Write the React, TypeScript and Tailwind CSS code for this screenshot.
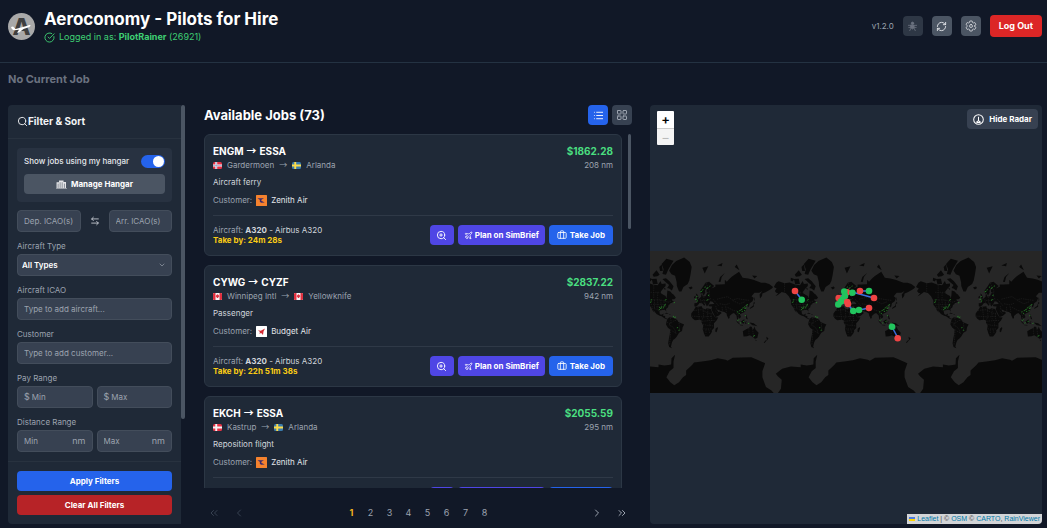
import React from "react";
import {
  ArrowLeftRight,
  Briefcase,
  ChevronDown,
  ChevronLeft,
  ChevronRight,
  ChevronsLeft,
  ChevronsRight,
  CircleCheckBig,
  LayoutGrid,
  List,
  Plane,
  RefreshCw,
  Search,
  ZoomIn,
} from "lucide-react";
import { IoSettingsOutline } from "react-icons/io5";

type Country = "no" | "se" | "ca" | "dk";

interface Place {
  icao: string;
  name: string;
  country: Country;
}

interface Job {
  from: Place;
  to: Place;
  pay: string;
  distance: string;
  kind: string;
  customer: "Zenith Air" | "Budget Air";
  takeBy: string;
}

const ESSA: Place = { icao: "ESSA", name: "Arlanda", country: "se" };

const JOBS: Job[] = [
  {
    from: { icao: "ENGM", name: "Gardermoen", country: "no" },
    to: ESSA,
    pay: "$1862.28",
    distance: "208 nm",
    kind: "Aircraft ferry",
    customer: "Zenith Air",
    takeBy: "24m 28s",
  },
  {
    from: { icao: "CYWG", name: "Winnipeg Intl", country: "ca" },
    to: { icao: "CYZF", name: "Yellowknife", country: "ca" },
    pay: "$2837.22",
    distance: "942 nm",
    kind: "Passenger",
    customer: "Budget Air",
    takeBy: "22h 51m 38s",
  },
  {
    from: { icao: "EKCH", name: "Kastrup", country: "dk" },
    to: ESSA,
    pay: "$2055.59",
    distance: "295 nm",
    kind: "Reposition flight",
    customer: "Zenith Air",
    takeBy: "23h 12m 05s",
  },
];

function Flag({ country }: { country: Country }) {
  return (
    <svg viewBox="0 0 18 14" className="h-[7px] w-[9px] shrink-0" aria-hidden="true">
      {country === "ca" ? (
        <>
          <rect width="18" height="14" rx="2" fill="#f3f4f6" />
          <path d="M2 0h3v14H2a2 2 0 0 1-2-2V2a2 2 0 0 1 2-2zM13 0h3a2 2 0 0 1 2 2v10a2 2 0 0 1-2 2h-3z" fill="#e0303f" />
          <path d="M9 2l1.200 2 1.600-.400-.300 2 1.300.800-2.400 2.200.200 1.200H7.400l.200-1.200-2.400-2.200 1.300-.800-.300-2 1.600.400z" fill="#e0303f" />
        </>
      ) : (
        <>
          <rect width="18" height="14" rx="3" fill={country === "se" ? "#3a7cae" : "#e63245"} />
          <path d="M0 7h18M6.500 0v14" stroke={country === "se" ? "#fbdb4a" : "#f6f4f7"} strokeWidth="3.800" />
          {country === "no" && <path d="M0 7h18M6.500 0v14" stroke="#8d97c4" strokeWidth="1.300" />}
        </>
      )}
    </svg>
  );
}

function Arrow() {
  return <span className="font-['Noto_Sans_CJK_JP',sans-serif] leading-none">→</span>;
}

function CustomerLogo({ name }: { name: Job["customer"] }) {
  return name === "Zenith Air" ? (
    <svg viewBox="0 0 22 22" className="size-[11px]" aria-hidden="true">
      <rect width="22" height="22" rx="1" fill="#f5822e" />
      <path d="M3 6.500h13l-4.500 2.500c-1.500 1.500-1 3 1 3.500l5 2.500-7 .500C7.500 15 7 12 8 10z" fill="#3d2a6b" />
    </svg>
  ) : (
    <svg viewBox="0 0 22 22" className="size-[11px]" aria-hidden="true">
      <rect width="22" height="22" rx="1" fill="#fff" />
      <path d="M4 8.500l5.500 1L18 5l-3 6-1 7-3.600-4-3.900 1.600 1.500-3.600z" fill="#d42b34" />
    </svg>
  );
}

function HangarIcon() {
  return (
    <svg viewBox="0 0 24 20" className="h-[9px] w-[11px]" fill="currentColor" aria-hidden="true">
      <path d="M1 17.500V5h5.500V1h10v3.500H22v13h2V19H0v-1.500z" opacity=".85" />
      <path d="M4.500 8v9.500M9 5v12.500M13.500 5v12.500M18.500 8v9.500" stroke="#4b5563" strokeWidth="1.300" />
    </svg>
  );
}

function BugIcon() {
  return (
    <svg viewBox="0 0 24 24" className="size-[11px]" fill="currentColor" stroke="currentColor" strokeWidth="1.800" strokeLinecap="round" aria-hidden="true">
      <circle cx="12" cy="5" r="2.600" />
      <path d="M8.500 9h7v5.500l-3.500 3-3.500-3z" />
      <path d="M3 9.500h18M4 14h16M9 15l-3 6M15 15l3 6" fill="none" />
    </svg>
  );
}

function RadarIcon() {
  return (
    <svg viewBox="0 0 24 24" className="size-[11px]" fill="none" stroke="currentColor" strokeWidth="2.200" aria-hidden="true">
      <circle cx="12" cy="12" r="10.500" />
      <path d="M12 6v8.500l5 4M7 18.500l5-4M8.500 18.500h7" />
    </svg>
  );
}

function Logo() {
  return (
    <svg viewBox="0 0 54 54" className="size-[27px] shrink-0" role="img" aria-label="Aeroconomy">
      <circle cx="27" cy="27" r="27" fill="#a9a9a9" />
      <text x="27" y="44" textAnchor="middle" fontFamily="Inter, sans-serif" fontWeight="800" fontSize="47" fill="#3f3f3f">
        A
      </text>
      <path d="M6 28l4-1 5 5 22-6c4-1 8-3 8-1s-4 4-8 5l-6 2-9 7-4 .500 4-6-9 1c-4 0-6-3-7-6.500z" fill="#fff" />
    </svg>
  );
}

/* ---------- Map ---------- */

const WORLD = 142.2;

// Land outlines as longitude, latitude pairs.
const LAND: number[][] = [
  // North America
  [-168, 66, -162, 70, -156, 71.3, -141, 69.6, -128, 70.3, -115, 68.5, -102, 67.8, -95, 71.5, -92, 69, -82, 69.5, -82, 67, -87, 65, -94, 61, -94, 58.7, -88, 56.7, -82, 55, -80, 51.3, -78.5, 56, -77.5, 62.3, -70, 61, -66, 58.6, -62, 57, -56, 52.5, -60, 50, -66, 50, -64.5, 47, -60.5, 46.5, -66, 43.8, -70.5, 43, -70.5, 41.5, -74.5, 39.8, -76, 35, -81, 31.5, -80.3, 25.5, -82.5, 28.5, -84.5, 30, -90, 29.5, -97, 28, -97.5, 22, -94.5, 18.3, -90.8, 19, -87, 21.5, -88.5, 16, -83.3, 15, -83, 10.5, -80, 9.3, -77.3, 8.5, -80, 7.3, -85, 10, -92, 14.5, -97, 16, -105, 20, -109, 25, -114.5, 31, -112, 27, -110, 23, -115, 28, -118, 34, -124, 40, -124.3, 48, -130, 54.5, -138, 59, -148, 60.5, -158, 56.5, -164, 54.6, -157, 58.8, -162, 59.5, -165.5, 61.5, -161, 64.5],
  // Greenland
  [-73, 78.2, -66, 80.8, -55, 82.3, -35, 83.4, -21, 82, -16, 80, -19, 76, -22, 72, -26, 69, -37, 66, -42, 61, -48, 61, -53.5, 67, -54, 70.5, -58, 75.3, -67, 76.2],
  // Canadian Arctic
  [-90, 73, -81, 73.6, -72, 71.3, -62, 66.8, -66, 62.3, -73, 64.5, -78, 65, -73, 68, -80, 70],
  [-117, 73, -105, 73.2, -102, 69, -114, 69],
  [-125, 74, -116, 73, -121, 71.2, -125.5, 72],
  [-92, 81.2, -80, 83, -62, 82.4, -75, 79, -81, 76, -90, 76.4, -87, 79],
  [-115, 76, -105, 78.4, -97, 76, -103, 75, -112, 74.7],
  [-98, 80, -92, 81, -89, 78, -96, 78],
  [-87, 65.5, -81, 64, -84, 63],
  // South America
  [-77.3, 8.5, -72, 12, -62, 10.6, -52, 5, -50, 0, -44, -2.5, -35, -6, -38.8, -13, -40.5, -22, -48, -26, -54, -34.5, -58, -38.3, -63, -41, -66, -46, -68.5, -52.5, -66, -55, -73, -53, -75.5, -47, -73.5, -38, -71.5, -30, -70.3, -18.5, -76, -14, -81, -6, -80, 0],
  // Cuba, Hispaniola
  [-84.5, 22, -80, 23, -74.5, 20.2, -77.5, 20],
  [-73.5, 20, -68.5, 19, -72, 18.2],
  // Iceland, British Isles
  [-24, 65.5, -16, 66.5, -13.6, 65, -19, 63.4],
  [-5.5, 58.5, -2, 57.6, 1.5, 52.6, 1, 51, -5, 50, -3, 54],
  [-10, 54, -6, 55.2, -6.3, 52.2, -10, 51.7],
  // Svalbard and Novaya Zemlya
  [11, 79.6, 26, 80.3, 17, 76.7],
  [52, 71, 56, 74.5, 68, 77, 60, 74.5, 57, 70.7],
  [48, 80.6, 62, 81.6, 60, 80.3],
  [93, 80, 105, 78.5, 98, 81],
  [137, 75.5, 150, 75.2, 143, 73.5],
  // Eurasia
  [-9.3, 43, -1.5, 43.5, -4.5, 48.4, 1.5, 50.5, 8, 53.8, 8.3, 57, 10.7, 57.5, 12, 54.2, 19, 54.5, 23.5, 59.3, 29, 60, 22, 60.2, 21.5, 63, 25.3, 65, 21.5, 65.3, 17.5, 61.5, 18.7, 60, 14.3, 55.5, 11, 59, 7, 58, 5, 61.5, 13, 66.5, 19, 70, 28, 71, 41, 67, 34, 64.5, 44, 66.3, 44, 68.5, 54, 68.5, 68, 68.7, 68, 72.5, 73, 71, 80, 73.3, 87, 75, 104, 77.7, 113, 74, 127, 73.5, 140, 72.5, 160, 70, 170, 70, 180, 69, 190, 66, 187, 64.4, 180, 62.5, 171, 60, 163, 58.5, 162, 55, 157, 51.2, 156, 57, 163, 61.7, 155, 59.3, 143, 59.3, 135.5, 54.7, 141, 52, 138, 46.5, 131, 42.8, 129.3, 37, 126.4, 34.5, 125, 39.5, 118, 39, 122, 37, 119.5, 34.8, 122, 30, 118, 24.5, 110, 21, 106, 19.5, 109, 13, 105, 8.8, 100.5, 13.5, 104, 1.3, 98.5, 9, 97.5, 16.5, 91, 22.5, 86.5, 20.5, 80, 15, 80, 11, 77.5, 8, 73, 17, 72.5, 21, 66.8, 25, 57, 27, 51, 30, 48, 30, 51.5, 25, 56, 25.7, 59.8, 22.5, 52, 15.7, 43.5, 12.8, 39, 21, 34.8, 28.5, 34, 32, 36, 36.5, 27.5, 37, 26.5, 40, 31, 41.3, 41.5, 41.5, 37, 45.5, 31, 46.5, 28, 42, 22.5, 36.8, 19.5, 41.8, 13, 45.6, 18.3, 40.2, 15.8, 38.2, 10.5, 43.2, 4, 43.5, -0.5, 39, -5.5, 36.2, -9, 37.3],
  // Africa
  [-6, 35.7, 10, 37.3, 11, 33.5, 19, 30.3, 22, 32.8, 32.3, 31.2, 37, 21, 43, 12, 51.2, 11.7, 47, 4, 40.5, -3, 40.5, -15, 35, -20, 35.3, -24, 32.5, -28, 27, -34, 18.5, -34.3, 15, -27, 11.8, -17.5, 13.5, -9, 9, -1, 9.5, 4, 4, 6.2, -7.5, 4.5, -13, 8.5, -17.3, 14.7, -17, 21, -10, 30],
  [49.5, -12.3, 50.3, -15.5, 47, -25, 43.5, -23, 44.3, -16.3],
  // Japan, Indonesia, Philippines, New Guinea
  [141.5, 45.3, 145, 43.3, 141, 41.5, 141, 36, 131, 31.3, 132, 34.3, 139, 38],
  [142, 54, 144, 50, 142.5, 46],
  [95.5, 5.5, 104, -2, 105.5, -5.8, 100, -1.5],
  [109, 1.5, 117, 7, 118, 1, 115.5, -4, 110.5, -2.5],
  [105.5, -6.5, 114, -7.5, 114, -8.7, 106.5, -7.7],
  [119.5, -5, 120, 1, 125, 1.5, 121, -1, 123, -4],
  [120.5, 18.5, 122, 18, 126, 7, 122.5, 8],
  [131, -0.8, 141, -2.7, 150.5, -10.5, 143, -8.5, 138, -8, 133, -4],
  // Australia, Tasmania, New Zealand
  [113.5, -22.5, 122, -18, 129, -14.8, 132, -11.3, 137, -12.2, 136, -15.2, 140.8, -17.5, 142.5, -10.8, 146, -19, 153.3, -26, 150, -37.4, 144, -38.7, 138, -35, 131, -31.5, 124, -33.5, 115.2, -34.3],
  [145, -40.8, 148.3, -41, 147, -43.5],
  [173, -34.5, 178.3, -37.8, 175.2, -41.5, 173.8, -39.2],
  [172.7, -40.6, 174, -41.8, 168.5, -46.5, 166.5, -45.8],
  // Antarctica
  [-158, -85.05, -150, -84, -148, -81, -158, -79.5, -163, -78.3, -155, -77, -147, -75.5, -125, -74, -100, -74.5, -100, -72.5, -85, -73.3, -75, -73, -68, -72.5, -67, -67, -58, -63.5, -62, -70, -62, -75, -72, -77, -80, -80, -70, -82, -60, -83, -48, -82, -38, -80, -30, -79, -30, -76.5, -15, -73, -10, -71, 10, -70, 32, -69, 50, -67, 70, -68.5, 75, -69.5, 88, -66.7, 110, -66.3, 135, -66, 150, -68.5, 170, -71.5, 163, -77, 163, -80, 172, -83.5, 186, -84.4, 192, -85.05],
];

// Country borders, drawn faintly over the land.
const BORDERS: number[][] = [
  [-141, 69.6, -141, 60],
  [-123, 49, -95, 49, -84, 46.5, -75, 45, -68, 47],
  [-117, 32.5, -106, 31.5, -97.5, 26],
  [-110, 49, -110, 32],
  [-102, 60, -102, 30],
  [-95, 49, -91, 30],
  [-120, 60, -95, 60],
  [-112, 68, -112, 49],
  [-86, 46, -86, 31],
  [-120, 41, -82, 41],
  [-118, 36, -78, 36],
  [-70, 11, -68, 2, -73, -8, -65, -11, -58, -20, -55, -30],
  [-79, 0, -70, -4, -60, 4, -52, 4],
  [-69, -18, -70, -35, -72, -50],
  [-65, -22, -55, -27],
  [-48, -2, -46, -24],
  [-12, 28, 10, 30, 25, 22, 34, 22],
  [-16, 15, 0, 14, 15, 13, 24, 14, 36, 14],
  [0, 36, 2, 20, 3, 6],
  [13, 33, 14, 14, 10, 5],
  [25, 32, 24, 10, 28, 4],
  [33, 22, 34, 4, 30, -2, 30, -12],
  [10, 2, 30, 4, 42, 4],
  [12, -5, 22, -8, 30, -8, 40, -10],
  [13, -17, 24, -17, 35, -17],
  [20, -18, 20, -30],
  [27, -18, 30, -28],
  [20, 70, 29, 62, 28, 55, 32, 50, 22, 48, 8, 48],
  [6, 50, 8, 44],
  [15, 54, 15, 46, 21, 42],
  [38, 50, 48, 42, 52, 38],
  [48, 50, 60, 52, 75, 54, 87, 49, 100, 51, 118, 49, 131, 48],
  [55, 42, 70, 40, 80, 43],
  [45, 38, 47, 30],
  [61, 36, 62, 26],
  [70, 37, 72, 25],
  [75, 35, 90, 28, 98, 27, 106, 22],
  [88, 48, 105, 42, 120, 46],
  [98, 22, 103, 14],
  [44, 27, 52, 20],
  [129, -15, 129, -31],
  [138, -16, 141, -37],
];

// Precipitation echoes as longitude, latitude pairs.
const RADAR: number[][] = [
  [-120, 45], [-118, 49], [-97, 35], [-94, 33], [-92, 36], [-88, 34], [-85, 38], [-83, 41], [-98, 30], [-82, 49], [-60, 44], [-62, 14],
  [-58, 12], [-48, -20], [-52, -14], [-5, 50], [-3, 54], [-2, 47], [8, 61], [12, 63], [18, 66], [24, 65], [27, 56], [30, 67], [24, 49],
  [100, 25], [106, 28], [110, 30], [114, 34], [118, 36], [120, 33], [112, 26], [118, 28], [124, 40], [104, 21], [120, 16], [102, 5],
  [116, 2], [128, -3], [142, -33], [108, -2],
];

function project(lon: number, lat: number): [number, number] {
  const x = ((lon + 180) / 360) * WORLD;
  const y = WORLD / 2 - (WORLD / (2 * Math.PI)) * Math.log(Math.tan(Math.PI / 4 + (lat * Math.PI) / 360));
  return [x, y];
}

function toPath(flat: number[]): string {
  let d = "";
  for (let i = 0; i < flat.length; i += 2) {
    const [x, y] = project(flat[i], flat[i + 1]);
    d += (i === 0 ? "M" : "L") + x.toFixed(2) + " " + y.toFixed(2);
  }
  return d;
}

const LAND_PATH = LAND.map((ring) => toPath(ring) + "Z").join("");
const BORDER_PATH = BORDERS.map(toPath).join("");

const ROUTES = [
  [145, 40, 152, 49],
  [202, 41, 224, 47],
  [210, 40, 219, 40],
  [188, 47, 197, 41],
  [188, 53, 197, 51],
  [198, 53, 203, 60],
  [209, 59, 219, 57],
  [242, 76, 248, 87],
];

const MARKERS: [number, number, "dep" | "arr"][] = [
  [145, 40, "arr"], [151.7, 48.7, "dep"], [197, 41.3, "arr"], [194.3, 40.6, "dep"], [202.4, 41.8, "dep"], [210, 40, "arr"],
  [219, 40, "dep"], [224, 47, "arr"], [188.7, 47, "arr"], [195, 45, "dep"], [193, 48, "dep"], [191, 50.6, "dep"],
  [188.3, 53.4, "dep"], [197.2, 51, "arr"], [198, 53, "arr"], [219, 57, "arr"], [209, 59, "dep"], [203.3, 60, "dep"],
  [242, 75.8, "dep"], [247.7, 87.2, "arr"],
];

function WorldMap() {
  return (
    <svg viewBox="0 0 392 142" preserveAspectRatio="xMidYMid slice" className="mt-[146px] h-[142px] w-full" role="img" aria-label="Map of available jobs">
      <defs>
        <g id="world">
          <path d={LAND_PATH} fill="#0a0a0a" />
          <path d={BORDER_PATH} fill="none" stroke="#262626" strokeWidth="0.5" strokeDasharray="1.500 0.800" />
          {RADAR.map(([lon, lat], i) => {
            const [x, y] = project(lon, lat);
            return <ellipse key={i} cx={x} cy={y} rx={i % 3 === 0 ? 1.2 : 0.8} ry="0.5" fill="#2a8a2c" opacity="0.8" transform={`rotate(-35 ${x} ${y})`} />;
          })}
        </g>
      </defs>
      <rect width="392" height="142" fill="#262626" />
      <use href="#world" x={-23.1} />
      <use href="#world" x={119.1} />
      <use href="#world" x={261.3} />
      {ROUTES.map(([x1, y1, x2, y2], i) => (
        <line key={i} x1={x1} y1={y1} x2={x2} y2={y2} stroke="#3b6fe0" strokeWidth="1.500" />
      ))}
      {MARKERS.map(([x, y, kind], i) => (
        <circle key={i} cx={x} cy={y} r="3.300" fill={kind === "dep" ? "#22c55e" : "#ef4444"} />
      ))}
    </svg>
  );
}

/* ---------- Panels ---------- */

const fieldClass =
  "h-[22px] w-full min-w-0 rounded border border-[#434d5b] bg-[#374151] px-[6px] text-[8px] text-gray-200 placeholder:text-[#9ca3af]";

function Header() {
  return (
    <header className="flex h-[63px] shrink-0 items-start justify-between border-b border-[#243242] pr-[5px] pl-2">
      <div className="flex items-start gap-[9px] pt-[9px]">
        <div className="pt-1">
          <Logo />
        </div>
        <div>
          <h1 className="text-[17px] leading-5 font-bold text-white">Aeroconomy - Pilots for Hire</h1>
          <p className="mt-[1px] flex items-center gap-1 text-[9px] leading-[14px] text-[#3fd074]">
            <CircleCheckBig className="size-[11px]" />
            <span>
              Logged in as: <strong className="font-bold">PilotRainer</strong> (26921)
            </span>
          </p>
        </div>
      </div>
      <div className="flex items-center gap-[9px] pt-[15px]">
        <span className="text-[8px] text-[#9ca3af]">v1.2.0</span>
        <button aria-label="Debug" className="flex size-5 items-center justify-center rounded bg-[#2e3745] text-[#6b7280]">
          <BugIcon />
        </button>
        <button aria-label="Refresh" className="flex size-5 items-center justify-center rounded bg-[#4b5563] text-gray-200">
          <RefreshCw className="size-[11px]" />
        </button>
        <button aria-label="Settings" className="flex size-5 items-center justify-center rounded bg-[#4b5563] text-gray-200">
          <IoSettingsOutline className="size-3" />
        </button>
        <button className="h-[22px] rounded bg-[#dc2626] px-[9px] text-[9px] font-bold text-white">Log Out</button>
      </div>
    </header>
  );
}

function Field({ id, label, children }: { id: string; label: string; children: React.ReactNode }) {
  return (
    <div className="flex flex-col gap-[2px]">
      <label htmlFor={id} className="text-[8px] leading-3 text-[#9ca3af]">
        {label}
      </label>
      {children}
    </div>
  );
}

function UnitInput({ id, label, placeholder, prefix, suffix }: { id: string; label: string; placeholder: string; prefix?: string; suffix?: string }) {
  return (
    <div className="flex h-[22px] min-w-0 flex-1 items-center gap-[2px] rounded border border-[#434d5b] bg-[#374151] px-[6px] text-[9px] text-[#9ca3af]">
      {prefix && <span>{prefix}</span>}
      <input id={id} aria-label={label} placeholder={placeholder} className="w-full min-w-0 bg-transparent text-[8px] placeholder:text-[#9ca3af]" />
      {suffix && <span>{suffix}</span>}
    </div>
  );
}

function Sidebar() {
  return (
    <aside className="flex w-[177px] shrink-0">
      <div className="flex flex-1 flex-col rounded-l bg-[#1f2937]">
        <h2 className="flex h-[34px] shrink-0 items-center border-b border-[#28323f] pr-2 pl-[9px] text-[10px] font-bold text-gray-100">
          <Search className="size-[11px]" />
          Filter &amp; Sort
        </h2>
        <div className="flex min-h-0 flex-1 flex-col gap-2 overflow-hidden px-[9px] pt-[9px]">
          <div className="flex flex-col gap-1 rounded bg-[#283241] px-[7px] pt-1 pb-2">
            <label className="flex h-[18px] items-center justify-between text-[8px] font-medium text-gray-200">
              Show jobs using my hangar
              <input
                type="checkbox"
                defaultChecked
                className="relative h-[13px] w-6 appearance-none rounded-full bg-[#4b5563] after:absolute after:top-[1px] after:right-[1px] after:size-[11px] after:rounded-full after:bg-white checked:bg-[#2563eb]"
              />
            </label>
            <button className="flex h-5 items-center justify-center gap-1 rounded bg-[#4b5563] text-[8px] font-bold text-white">
              <HangarIcon />
              Manage Hangar
            </button>
          </div>
          <div className="flex items-center gap-[9px]">
            <input aria-label="Departure ICAO codes" placeholder="Dep. ICAO(s)" className={fieldClass} />
            <button aria-label="Swap departure and arrival" className="shrink-0 text-gray-300">
              <ArrowLeftRight className="size-[10px]" />
            </button>
            <input aria-label="Arrival ICAO codes" placeholder="Arr. ICAO(s)" className={fieldClass} />
          </div>
          <Field id="type" label="Aircraft Type">
            <div className="relative">
              <select id="type" className="block h-[22px] w-full appearance-none rounded border border-[#434d5b] bg-[#374151] px-1 text-[8px] font-semibold text-white">
                <option>All Types</option>
              </select>
              <ChevronDown className="pointer-events-none absolute top-[7px] right-[6px] size-2 text-[#9ca3af]" />
            </div>
          </Field>
          <Field id="icao" label="Aircraft ICAO">
            <input id="icao" placeholder="Type to add aircraft..." className={fieldClass} />
          </Field>
          <Field id="customer" label="Customer">
            <input id="customer" placeholder="Type to add customer..." className={fieldClass} />
          </Field>
          <Field id="pay-min" label="Pay Range">
            <div className="flex gap-1">
              <UnitInput id="pay-min" label="Minimum pay" placeholder="Min" prefix="$" />
              <UnitInput id="pay-max" label="Maximum pay" placeholder="Max" prefix="$" />
            </div>
          </Field>
          <Field id="dist-min" label="Distance Range">
            <div className="flex gap-1">
              <UnitInput id="dist-min" label="Minimum distance" placeholder="Min" suffix="nm" />
              <UnitInput id="dist-max" label="Maximum distance" placeholder="Max" suffix="nm" />
            </div>
          </Field>
        </div>
        <div className="flex shrink-0 flex-col gap-1 border-t border-[#28323f] px-[9px] py-[9px]">
          <button className="h-5 rounded bg-[#2563eb] text-[8px] font-bold text-white">Apply Filters</button>
          <button className="h-5 rounded bg-[#b72327] text-[8px] font-bold text-white">Clear All Filters</button>
        </div>
      </div>
      <div className="w-1">
        <div className="h-3/4 rounded-full bg-[#4b5563]" />
      </div>
    </aside>
  );
}

function JobCard({ job }: { job: Job }) {
  return (
    <article className="shrink-0 rounded-md border border-[#2c3745] bg-[#1f2937] px-2 pt-2 pb-[10px]">
      <div className="flex justify-between">
        <div>
          <h3 className="flex h-4 items-center gap-[3px] text-[10px] font-bold text-white">
            {job.from.icao}
            <Arrow />
            {job.to.icao}
          </h3>
          <p className="flex h-3 items-center gap-[5px] text-[8px] text-[#9ca3af]">
            <Flag country={job.from.country} />
            {job.from.name}
            <Arrow />
            <Flag country={job.to.country} />
            {job.to.name}
          </p>
        </div>
        <div className="text-right">
          <p className="text-[10px] leading-4 font-bold text-[#4ade80]">{job.pay}</p>
          <p className="text-[8px] leading-3 text-[#9ca3af]">{job.distance}</p>
        </div>
      </div>
      <p className="mt-[5px] text-[8px] leading-3 text-[#d1d5db]">{job.kind}</p>
      <p className="mt-[6px] flex items-center gap-1 text-[8px] leading-3 text-[#9ca3af]">
        Customer:
        <CustomerLogo name={job.customer} />
        <span className="text-gray-200">{job.customer}</span>
      </p>
      <div className="mt-[9px] flex items-center justify-between border-t border-[#2f3947] pt-[9px]">
        <div className="text-[8px] leading-[10px]">
          <p className="text-[#d1d5db]">
            <span className="text-[#9ca3af]">Aircraft:</span> <strong className="font-bold">A320</strong> - Airbus A320
          </p>
          <p className="font-bold text-[#facc15]">Take by: {job.takeBy}</p>
        </div>
        <div className="flex gap-1 text-[8px] font-bold text-white">
          <button aria-label="Show details" className="flex h-5 w-6 items-center justify-center rounded bg-[#4f46e5]">
            <ZoomIn className="size-[11px]" />
          </button>
          <button className="flex h-5 items-center gap-[2px] rounded bg-[#4f46e5] px-[6px]">
            <Plane className="size-[9px]" />
            Plan on SimBrief
          </button>
          <button className="flex h-5 items-center gap-[3px] rounded bg-[#2563eb] px-2">
            <Briefcase className="size-[10px]" />
            Take Job
          </button>
        </div>
      </div>
    </article>
  );
}

function Jobs() {
  return (
    <section className="flex min-w-0 flex-[428] flex-col">
      <div className="flex h-5 shrink-0 items-center justify-between">
        <h2 className="text-[13px] leading-[18px] font-bold text-white">Available Jobs (73)</h2>
        <div className="flex gap-1">
          <button aria-label="List view" className="flex size-5 items-center justify-center rounded bg-[#2563eb] text-white">
            <List className="size-[11px]" />
          </button>
          <button aria-label="Grid view" className="flex size-5 items-center justify-center rounded bg-[#374151] text-[#9ca3af]">
            <LayoutGrid className="size-3" />
          </button>
        </div>
      </div>
      <div className="mt-[9px] flex min-h-0 flex-1 gap-[6px]">
        <div className="flex min-w-0 flex-1 flex-col gap-[9px] overflow-y-auto [scrollbar-width:none]">
          {JOBS.map((job) => (
            <JobCard key={job.from.icao} job={job} />
          ))}
        </div>
        <div className="mr-[1px] w-[3px]">
          <div className="h-[95px] rounded-full bg-[#4b5563]" />
        </div>
      </div>
      <nav aria-label="Pages" className="flex h-9 shrink-0 items-end justify-between px-1 pb-[5px] text-[9px] text-[#9ca3af]">
        <div className="flex h-3 items-center gap-[13px] text-[#374151]">
          <button aria-label="First page"><ChevronsLeft className="size-3" /></button>
          <button aria-label="Previous page"><ChevronLeft className="size-3" /></button>
        </div>
        <div className="flex h-3 items-center">
          {[1, 2, 3, 4, 5, 6, 7, 8].map((n) => (
            <button key={n} className={n === 1 ? "w-[19px] font-bold text-[#f2b21d]" : "w-[19px]"}>
              {n}
            </button>
          ))}
        </div>
        <div className="flex h-3 items-center gap-[13px]">
          <button aria-label="Next page"><ChevronRight className="size-3" /></button>
          <button aria-label="Last page"><ChevronsRight className="size-3" /></button>
        </div>
      </nav>
    </section>
  );
}

function MapPanel() {
  return (
    <section className="relative min-w-0 flex-[392] overflow-hidden rounded bg-[#1f2937]">
      <WorldMap />
      <div className="absolute top-[6px] left-[7px] flex w-[17px] flex-col overflow-hidden rounded-[1px] text-[13px] leading-none font-semibold">
        <button aria-label="Zoom in" className="h-[17px] bg-white text-black">+</button>
        <button aria-label="Zoom out" className="h-[17px] border-t border-[#ccc] bg-[#f4f4f4] font-normal text-[#bbb]">−</button>
      </div>
      <button className="absolute top-1 right-1 flex h-5 items-center gap-[5px] rounded bg-[#374151] px-[6px] text-[8px] font-bold text-white">
        <RadarIcon />
        Hide Radar
      </button>
      <p className="absolute right-0 bottom-0 flex h-[10px] items-center gap-[2px] bg-white/80 px-[2px] font-['Liberation_Sans',sans-serif] text-[7px] text-[#444]">
        <svg viewBox="0 0 12 8" className="h-[4px] w-[6px]" aria-hidden="true">
          <path fill="#4C7BE1" d="M0 0h12v4H0z" />
          <path fill="#FFD500" d="M0 4h12v4H0z" />
        </svg>
        <span>
          <a href="#leaflet" className="text-[#0078a8]">Leaflet</a> | © <a href="#osm" className="text-[#0078a8]">OSM</a> ©{" "}
          <a href="#carto" className="text-[#0078a8]">CARTO</a>, <a href="#rainviewer" className="text-[#0078a8]">RainViewer</a>
        </span>
      </p>
    </section>
  );
}

export default function App() {
  return (
    <div className="flex h-screen flex-col overflow-hidden bg-[#111827] font-['Inter',sans-serif] text-gray-200">
      <Header />
      <div className="flex h-[42px] shrink-0 items-start px-2 pt-2">
        <h2 className="text-[11px] leading-4 font-bold text-[#6b7280]">No Current Job</h2>
      </div>
      <main className="flex min-h-0 flex-1 pr-[5px] pb-1 pl-2">
        <Sidebar />
        <div className="flex min-w-0 flex-1 gap-[18px] pl-[19px]">
          <Jobs />
          <MapPanel />
        </div>
      </main>
    </div>
  );
}
